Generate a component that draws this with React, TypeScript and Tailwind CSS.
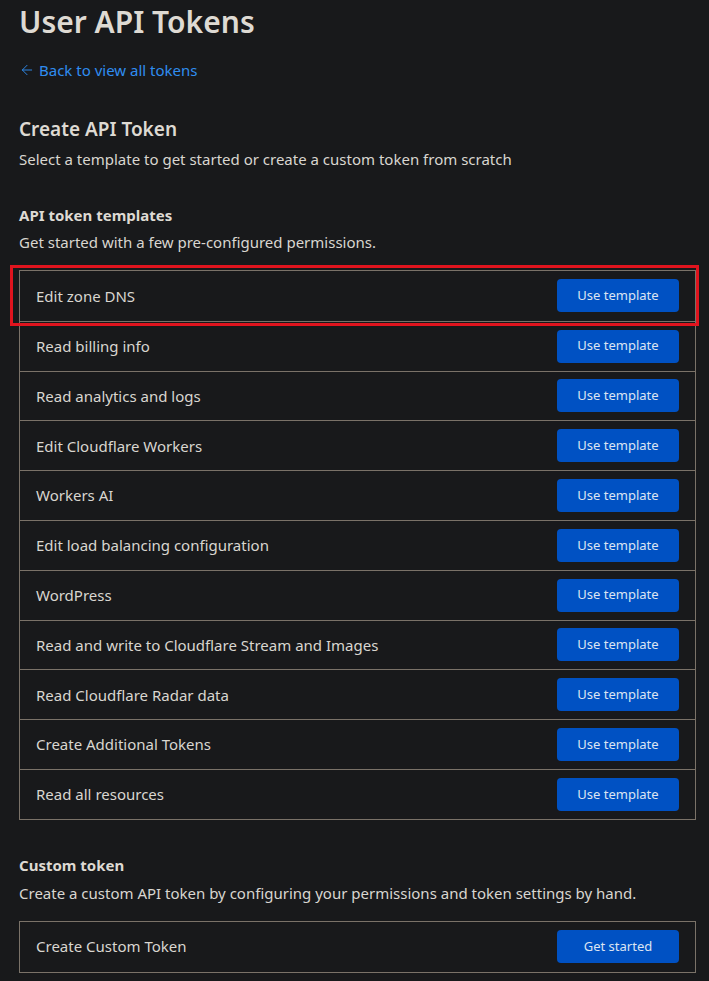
import { ArrowLeft } from 'lucide-react';

const TEMPLATES = [
  'Edit zone DNS',
  'Read billing info',
  'Read analytics and logs',
  'Edit Cloudflare Workers',
  'Workers AI',
  'Edit load balancing configuration',
  'WordPress',
  'Read and write to Cloudflare Stream and Images',
  'Read Cloudflare Radar data',
  'Create Additional Tokens',
  'Read all resources',
];

function Row({ label, action, first }: { label: string; action: string; first?: boolean }) {
  return (
    <div
      className={
        'flex items-center justify-between h-[49.8px] pl-[16px] pr-[16px] ' +
        (first ? '' : 'border-t border-[#7a7268]')
      }
    >
      <span className="text-[15px] text-[#d9d6d0]">{label}</span>
      <button className="w-[122px] h-[33px] rounded-[4px] bg-[#0051c3] text-[13px] text-[#dce4f2]">
        {action}
      </button>
    </div>
  );
}

export default function App() {
  return (
    <div
      className="min-h-[981px] w-full bg-[#18191b] pl-[19px] pr-[13px] text-[#d9d6d0]"
      style={{ fontFamily: '"Noto Sans", sans-serif' }}
    >
      <h1 className="pt-[4px] text-[30px] leading-[36px] font-semibold text-[#dedad3]">User API Tokens</h1>

      <a className="mt-[20px] flex items-center gap-[4px] text-[15px] leading-[20px] text-[#2f8df0]">
        <ArrowLeft size={16} strokeWidth={1.4} />
        Back to view all tokens
      </a>

      <h2 className="mt-[36px] text-[19px] leading-[26px] font-semibold text-[#dedad3]">Create API Token</h2>
      <p className="mt-[7px] text-[15px] leading-[20px]">
        Select a template to get started or create a custom token from scratch
      </p>

      <h3 className="mt-[35px] text-[15px] leading-[22px] font-bold text-[#dedad3]">API token templates</h3>
      <p className="mt-[6px] text-[15px] leading-[20px]">Get started with a few pre-configured permissions.</p>

      <div className="relative mt-[18px] border border-[#7a7268]">
        <div className="pointer-events-none absolute left-[-10px] right-[-4px] top-[-6px] h-[61px] border-[3px] border-[#e0141e]" />
        {TEMPLATES.map((t, i) => (
          <Row key={t} label={t} action="Use template" first={i === 0} />
        ))}
      </div>

      <h3 className="mt-[34px] text-[15px] leading-[22px] font-bold text-[#dedad3]">Custom token</h3>
      <p className="mt-[7px] text-[15px] leading-[20px]">
        Create a custom API token by configuring your permissions and token settings by hand.
      </p>

      <div className="mt-[18px] border border-[#7a7268]">
        <Row label="Create Custom Token" action="Get started" first />
      </div>
    </div>
  );
}
